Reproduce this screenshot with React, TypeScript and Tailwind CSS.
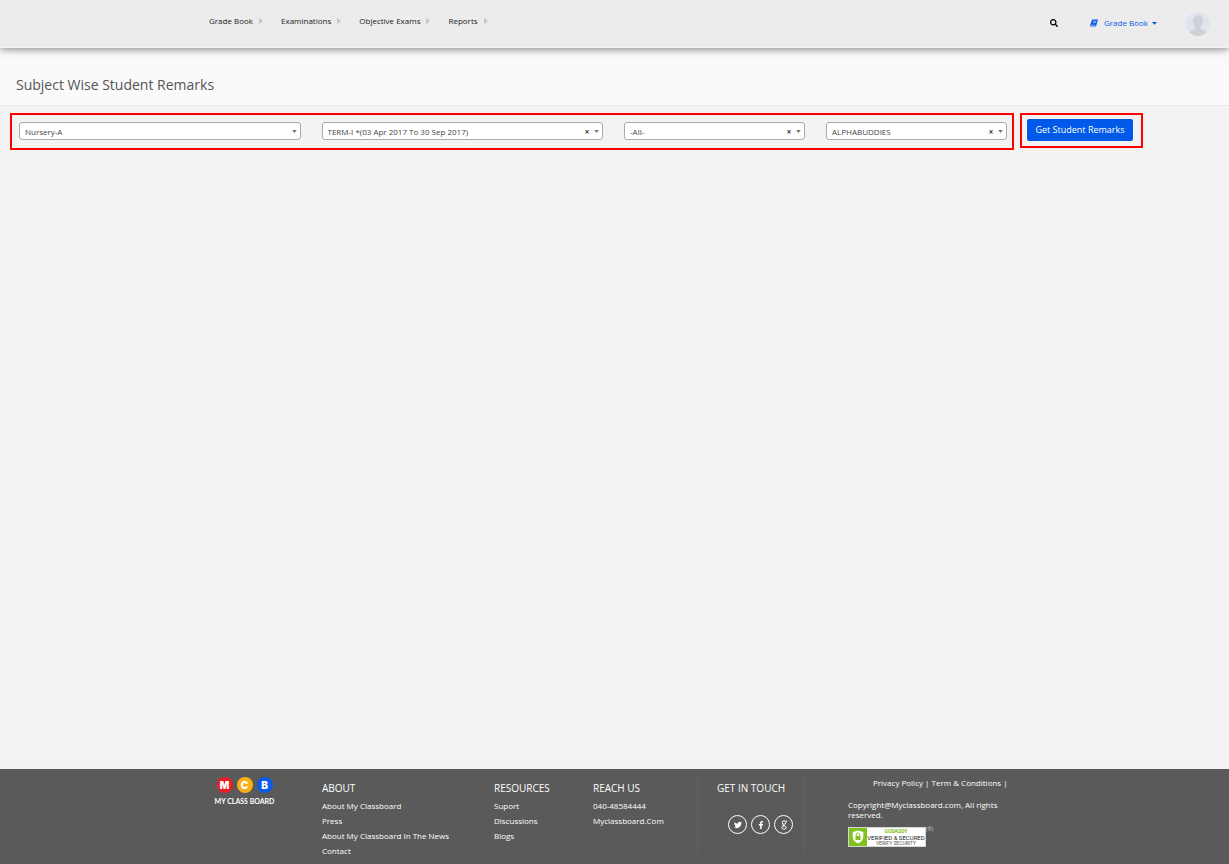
import { FaCaretDown, FaFacebookF, FaSearch, FaTwitter } from 'react-icons/fa';

const menu = ['Grade Book', 'Examinations', 'Objective Exams', 'Reports'];

const filters = [
  { id: 'class', label: 'Class', value: 'Nursery-A', clearable: false },
  { id: 'term', label: 'Term', value: 'TERM-I *(03 Apr 2017 To 30 Sep 2017)', clearable: true },
  { id: 'group', label: 'Group', value: '-All-', clearable: true },
  { id: 'subject', label: 'Subject', value: 'ALPHABUDDIES', clearable: true },
];

function Filter({ id, label, value, clearable }: (typeof filters)[number]) {
  return (
    <div className="relative">
      <select
        id={id}
        aria-label={label}
        defaultValue={value}
        className="block h-[18px] w-full appearance-none rounded-[3px] border border-[#aaa] bg-white pl-[5px] pr-6 pt-0.5 text-[8px] leading-[14px] text-[#444]"
      >
        <option value={value}>{value}</option>
      </select>
      {clearable && (
        <button
          type="button"
          aria-label={`Clear ${label}`}
          className="absolute right-3 top-[5px] h-[10px] w-2 text-center text-[8px] font-bold leading-[10px] text-[#333]"
        >
          ×
        </button>
      )}
      <svg viewBox="0 0 6 4" className="pointer-events-none absolute right-1 top-2 h-[3px] w-[5px] fill-[#777]" aria-hidden="true">
        <path d="M0 0h6L3 4z" />
      </svg>
    </div>
  );
}

function FooterColumn({ title, links, className }: { title: string; links: string[]; className: string }) {
  return (
    <div className={className}>
      <h2 className="text-[10px] leading-3">{title}</h2>
      <ul className="mt-1">
        {links.map((link) => (
          <li key={link} className="text-[8px] leading-[15px]">
            <a href="#">{link}</a>
          </li>
        ))}
      </ul>
    </div>
  );
}

function Logo() {
  return (
    <a href="#" aria-label="My Class Board" className="flex w-[61px] flex-col items-center">
      <span className="flex gap-1 font-['Inter',sans-serif] text-[10px] font-black leading-4">
        <span className="h-4 w-4 rounded-full bg-[#ee1c25] text-center">M</span>
        <span className="h-4 w-4 rounded-full bg-[#fbaf17] text-center">C</span>
        <span className="h-4 w-4 rounded-full bg-[#0a5bea] text-center">B</span>
      </span>
      <span className="mt-1 whitespace-nowrap font-['Lato',sans-serif] text-[7px] font-bold leading-[8px]">MY CLASS BOARD</span>
    </a>
  );
}

function Seal() {
  return (
    <a href="#" aria-label="GoDaddy Verified & Secured" className="mt-[7px] flex w-[84px] items-start">
      <span className="flex h-5 w-[78px] shrink-0 border border-[#d5d5d5] bg-white">
        <span className="flex w-[18px] shrink-0 items-center justify-center bg-[#7fc31c]">
          <svg viewBox="0 0 12 14" className="h-[14px] w-3" aria-hidden="true">
            <path d="M6 .5 11.3 2v5c0 3-2.200 5-5.300 6.500C2.900 12 .7 10 .7 7V2z" fill="#fff" />
            <path d="M4.300 6V4.800a1.700 1.700 0 0 1 3.400 0V6" fill="none" stroke="#7fc31c" strokeWidth="1" />
            <path d="M3.500 6h5v4h-5z" fill="#7fc31c" />
          </svg>
        </span>
        <span className="flex flex-1 flex-col items-center justify-center whitespace-nowrap font-['Roboto',sans-serif]">
          <span className="text-[5px] font-bold leading-[5px] text-[#7fc31c]">GODADDY</span>
          <span className="font-['Liberation_Sans_Narrow','Roboto',sans-serif] text-[6px] leading-[7px] text-[#222]">VERIFIED &amp; SECURED</span>
          <span className="text-[5px] leading-[5px] text-[#555]">VERIFY SECURITY</span>
        </span>
      </span>
      <span className="text-[5px] leading-[5px] text-[#ccc]">(®)</span>
    </a>
  );
}

const social = 'flex h-[19px] w-[19px] items-center justify-center rounded-full border border-white';

export default function App() {
  return (
    <div className="flex min-h-screen flex-col bg-[#f3f3f3] font-['Open_Sans',sans-serif] text-[8px] text-[#333]">
      <header className="z-10 flex h-12 items-center border-b border-[#f5f5f5] bg-[#ececec] pl-[209px] pr-[19px] shadow-[0_1px_8px_0_rgba(0,0,0,0.5)]">
        <nav className="mb-[5px] flex gap-[18px]">
          {menu.map((item) => (
            <a key={item} href="#" className="flex items-center gap-1.5 text-[8px] leading-3 text-[#222]">
              {item}
              <svg viewBox="0 0 4 6" className="h-[6px] w-1 fill-[#c4c4c4]" aria-hidden="true">
                <path d="M0 0l4 3-4 3z" />
              </svg>
            </a>
          ))}
        </nav>
        <div className="ml-auto flex items-center">
          <button type="button" aria-label="Search" className="mb-0.5 mr-8">
            <FaSearch className="h-2 w-2 text-black" />
          </button>
          <button type="button" className="mb-0.5 mr-7 flex items-center text-[8px] leading-3 text-[#0a5bea]">
            <svg viewBox="0 0 16 16" className="mr-1.5 h-2 w-2" aria-hidden="true">
              <path d="M5.500 1H15q1 0 .7 1L12.500 13.500q-.5 1.500-2 1.500H2Q0 15 .3 12.500L3.500 2.500Q4 1 5.500 1z" fill="#0a5bea" />
              <path d="M6.500 4.500h6M5.800 7h6M2 12.600h8.500" stroke="#dfe9fb" strokeWidth="1.200" fill="none" />
            </svg>
            Grade Book
            <FaCaretDown className="ml-[3px] h-2 w-[7px]" />
          </button>
          <button type="button" aria-label="Profile">
            <svg viewBox="0 0 24 24" className="h-6 w-6" aria-hidden="true">
              <circle cx="12" cy="12" r="12" fill="#e1e4ee" />
              <path d="M12 3.500c-3.500 0-5.500 2.500-5 6 .2 2.500 1.200 4 2.500 5.500 0 1.500-.3 2-1.500 2.500-2 .7-3.500 1.200-4.500 2.800A12 12 0 0 0 12 24a12 12 0 0 0 8.500-3.700c-1-1.600-2.500-2.100-4.500-2.800-1.200-.5-1.500-1-1.500-2.500C15.800 13.500 16.800 12 17 9.500c.5-3.500-1.500-6-5-6z" fill="#cfd1d9" />
            </svg>
          </button>
        </div>
      </header>

      <div className="border-b border-[#e8e8e8] bg-[#fafafa] pb-[11px] pl-4 pt-7">
        <h1 className="text-[14px] leading-[18px] text-[#555]">Subject Wise Student Remarks</h1>
      </div>

      <main className="flex flex-1 items-start gap-1.5 pl-[10px] pr-[86px] pt-[7px]">
        <form className="grid flex-1 grid-cols-[14fr_14fr_9fr_9fr] gap-[21px] border-2 border-[#f00] pb-2 pl-[7px] pr-[5px] pt-[7px]">
          {filters.map((filter) => (
            <Filter key={filter.id} {...filter} />
          ))}
        </form>
        <div className="border-2 border-[#f00] pb-[5px] pl-[5px] pr-2 pt-1">
          <button type="button" className="block h-[22px] w-[106px] whitespace-nowrap rounded-[2px] bg-[#0059e8] text-[9px] leading-[22px] text-white">
            Get Student Remarks
          </button>
        </div>
      </main>

      <footer className="flex min-h-[95px] items-start bg-[#5a5a5a] pl-[214px] pt-2 text-white">
        <div className="w-[108px] shrink-0">
          <Logo />
        </div>
        <FooterColumn className="w-[172px] shrink-0 pt-[5px]" title="ABOUT" links={['About My Classboard', 'Press', 'About My Classboard In The News', 'Contact']} />
        <FooterColumn className="w-[99px] shrink-0 pt-[5px]" title="RESOURCES" links={['Suport', 'Discussions', 'Blogs']} />
        <FooterColumn className="w-[104px] shrink-0 pt-[5px]" title="REACH US" links={['040-48584444', 'Myclassboard.Com']} />
        <div className="h-[76px] w-[108px] shrink-0 border-x border-[#626262] pl-[19px] pt-[5px]">
          <h2 className="text-[10px] leading-3">GET IN TOUCH</h2>
          <div className="ml-[11px] mt-[21px] flex gap-1">
            <a href="#" aria-label="Twitter" className={social}>
              <FaTwitter className="h-2 w-2" />
            </a>
            <a href="#" aria-label="Facebook" className={social}>
              <FaFacebookF className="h-2 w-2" />
            </a>
            <a href="#" aria-label="Google" className={social}>
              <svg viewBox="0 0 8 10" className="h-[10px] w-2" fill="none" stroke="currentColor" aria-hidden="true">
                <path d="M7.200 1.200H5.500M4 .8a1.700 1.800 0 1 0 .01 3.600A1.700 1.800 0 0 0 4 .8zM3.200 4.400c-1 .9-.4 1.300.8 1.500C6 6.200 6.600 7 6.300 8 5.900 9.500 2 9.500 1.700 8c-.2-1 .8-1.900 2.300-2" strokeWidth="1" />
              </svg>
            </a>
          </div>
        </div>
        <div className="ml-[43px] w-[162px] shrink-0 leading-[10px]">
          <p className="whitespace-nowrap pl-[25px] pt-px">
            <a href="#">Privacy Policy</a> | <a href="#">Term &amp; Conditions</a> |
          </p>
          <p className="mt-3">Copyright@Myclassboard.com, All rights reserved.</p>
          <Seal />
        </div>
      </footer>
    </div>
  );
}
